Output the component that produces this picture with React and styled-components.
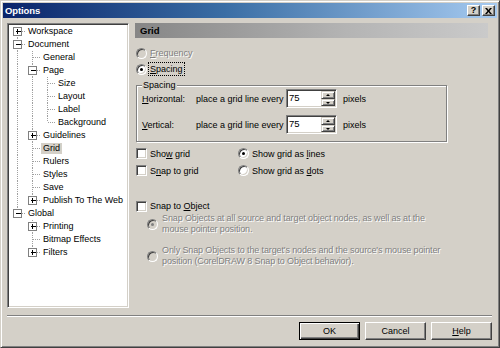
import React from 'react'
import styled, { createGlobalStyle } from 'styled-components'

const GlobalStyle = createGlobalStyle`
  html, body {
    margin: 0;
    padding: 0;
    background: #d4d0c8;
  }
  body {
    font-family: "Liberation Sans", Arial, sans-serif;
    font-size: 9px;
    color: #000;
  }
`

const Window = styled.div`
  box-sizing: border-box;
  width: 500px;
  height: 348px;
  padding: 2px;
  background: #d4d0c8;
  border: 1px solid;
  border-color: #d4d0c8 #404040 #404040 #d4d0c8;
  box-shadow: inset 1px 1px #fff, inset -1px -1px #808080;
  display: flex;
  flex-direction: column;
`

const TitleBar = styled.div`
  height: 15px;
  display: flex;
  align-items: center;
  padding: 0 0 0 2px;
  background: linear-gradient(to right, #0a246a, #3a6ea5 45%, #a6caf0);
`

const TitleText = styled.span`
  flex: 1;
  color: #fff;
  font-weight: bold;
  font-size: 9.5px;
  letter-spacing: -0.1px;
`

const TitleButton = styled.span`
  box-sizing: border-box;
  width: 13px;
  height: 11px;
  margin-left: ${p => p.$gap || 0}px;
  display: flex;
  align-items: center;
  justify-content: center;
  background: #d4d0c8;
  border: 1px solid;
  border-color: #fff #404040 #404040 #fff;
  box-shadow: inset -1px -1px #808080;
  font-weight: bold;
  font-size: 9px;
  line-height: 1;
`

const Main = styled.div`
  display: flex;
  gap: 6px;
  padding: 5px 0 0 4px;
`

const Tree = styled.div`
  box-sizing: border-box;
  width: 122px;
  height: 285px;
  background: #fff;
  border: 1px solid;
  border-color: #808080 #fff #fff #808080;
  box-shadow: inset 1px 1px #404040, inset -1px -1px #d4d0c8;
  padding: 1px 0 0 1px;
`

const TreeRow = styled.div`
  display: flex;
  align-items: center;
  height: 13px;
  white-space: nowrap;
`

const TreeLabel = styled.span`
  margin-left: 1px;
  padding: 0 2px;
  line-height: 11px;
  background: ${p => (p.$selected ? '#d4d0c8' : 'transparent')};
`

const Panel = styled.div`
  width: 353px;
  display: flex;
  flex-direction: column;
`

const Header = styled.div`
  height: 15px;
  display: flex;
  align-items: center;
  padding-left: 5px;
  font-weight: bold;
  font-size: 9.5px;
  background: linear-gradient(to right, #868686, #b4b4b4 60%, #cacaca);
`

const OptionRow = styled.div`
  display: flex;
  align-items: center;
  height: ${p => p.$h || 16}px;
  margin-top: ${p => p.$mt || 0}px;
  padding-left: ${p => p.$pl ?? 1}px;
`

const Radio = styled.span`
  box-sizing: border-box;
  flex: none;
  position: relative;
  width: 11px;
  height: 11px;
  border-radius: 50%;
  border: 1px solid;
  border-color: #808080 #fff #fff #808080;
  box-shadow: inset 1px 1px #404040, inset -1px -1px #d4d0c8;
  background: ${p => (p.$disabled ? '#d4d0c8' : '#fff')};

  &::after {
    content: '';
    display: ${p => (p.$checked ? 'block' : 'none')};
    position: absolute;
    left: 3px;
    top: 3px;
    width: 3px;
    height: 3px;
    border-radius: 50%;
    background: ${p => (p.$disabled ? '#808080' : '#000')};
  }
`

const Check = styled.span`
  box-sizing: border-box;
  flex: none;
  width: 11px;
  height: 11px;
  border: 1px solid;
  border-color: #808080 #fff #fff #808080;
  box-shadow: inset 1px 1px #404040, inset -1px -1px #d4d0c8;
  background: #fff;
`

const OptionText = styled.span`
  margin-left: 1px;
  padding: 0 1px;
  line-height: 12px;
  border: 1px dotted ${p => (p.$focus ? '#000' : 'transparent')};
  color: ${p => (p.$disabled ? '#808080' : '#000')};
  text-shadow: ${p => (p.$disabled ? '1px 1px 0 #fff' : 'none')};
`

const Group = styled.div`
  position: relative;
  box-sizing: border-box;
  width: 311px;
  height: 57px;
  margin: 8px 0 0 1px;
  padding: 3px 0 0 5px;
  border: 1px solid #808080;
  box-shadow: 1px 1px #fff, inset 1px 1px #fff;
  display: flex;
  flex-direction: column;
  gap: 7px;
`

const GroupTitle = styled.span`
  position: absolute;
  top: -7px;
  left: 5px;
  padding: 0 1px;
  line-height: 12px;
  background: #d4d0c8;
`

const GroupRow = styled.div`
  display: flex;
  align-items: center;
  height: 19px;
`

const FieldLabel = styled.span`
  width: ${p => p.$w}px;
  flex: none;
`

const SpinBox = styled.div`
  box-sizing: border-box;
  width: 51px;
  height: 19px;
  display: flex;
  background: #fff;
  border: 1px solid;
  border-color: #808080 #fff #fff #808080;
  box-shadow: inset 1px 1px #404040, inset -1px -1px #d4d0c8;
  padding: 1px;
`

const SpinValue = styled.span`
  flex: 1;
  padding: 1px 0 0 1px;
  font-size: 9.5px;
`

const SpinButtons = styled.div`
  width: 14px;
  display: flex;
  flex-direction: column;
`

const SpinButton = styled.span`
  box-sizing: border-box;
  flex: 1;
  position: relative;
  background: #d4d0c8;
  border: 1px solid;
  border-color: #d4d0c8 #404040 #404040 #d4d0c8;
  box-shadow: inset 1px 1px #fff, inset -1px -1px #808080;

  &::after {
    content: '';
    position: absolute;
    left: 4px;
    top: 2px;
    border-left: 2px solid transparent;
    border-right: 2px solid transparent;
    ${p => (p.$up ? 'border-bottom: 2px solid #000;' : 'border-top: 2px solid #000;')}
  }
`

const Unit = styled.span`
  margin-left: 6px;
`

const ChoiceGrid = styled.div`
  display: grid;
  grid-template-columns: 102px auto;
  grid-auto-rows: 17px;
  margin: 3px 0 0 1px;
`

const Choice = styled.div`
  display: flex;
  align-items: center;
`

const SubOption = styled.div`
  display: flex;
  align-items: center;
  margin-top: ${p => p.$mt}px;
  padding-left: 12px;
`

const SubText = styled.span`
  margin-left: 4px;
  max-width: 284px;
  line-height: 11px;
  letter-spacing: -0.12px;
  color: #808080;
  text-shadow: 1px 1px 0 #fff;
`

const Separator = styled.div`
  margin: 7px 5px 0 4px;
  border-top: 1px solid #808080;
  border-bottom: 1px solid #fff;
`

const Footer = styled.div`
  display: flex;
  justify-content: flex-end;
  gap: 5px;
  margin-top: 5px;
  padding-right: 5px;
`

const Button = styled.span`
  box-sizing: border-box;
  width: 61px;
  height: 18px;
  display: flex;
  align-items: center;
  justify-content: center;
  background: #d4d0c8;
  border: 1px solid;
  border-color: ${p => (p.$default ? '#000' : '#fff #404040 #404040 #fff')};
  box-shadow: ${p =>
    p.$default
      ? 'inset 1px 1px #fff, inset -1px -1px #404040, inset -2px -2px #808080'
      : 'inset -1px -1px #808080'};
`

const U = styled.span`
  text-decoration: underline;
`

const treeItems = [
  { label: 'Workspace', level: 0, box: '+', first: true, guides: [] },
  { label: 'Document', level: 0, box: '-', guides: [] },
  { label: 'General', level: 1, guides: [0] },
  { label: 'Page', level: 1, box: '-', guides: [0] },
  { label: 'Size', level: 2, guides: [0, 1] },
  { label: 'Layout', level: 2, guides: [0, 1] },
  { label: 'Label', level: 2, guides: [0, 1] },
  { label: 'Background', level: 2, last: true, guides: [0, 1] },
  { label: 'Guidelines', level: 1, box: '+', guides: [0] },
  { label: 'Grid', level: 1, selected: true, guides: [0] },
  { label: 'Rulers', level: 1, guides: [0] },
  { label: 'Styles', level: 1, guides: [0] },
  { label: 'Save', level: 1, guides: [0] },
  { label: 'Publish To The Web', level: 1, box: '+', last: true, guides: [0] },
  { label: 'Global', level: 0, box: '-', last: true, guides: [] },
  { label: 'Printing', level: 1, box: '+', guides: [] },
  { label: 'Bitmap Effects', level: 1, guides: [] },
  { label: 'Filters', level: 1, box: '+', last: true, guides: [] },
]

// dotted guide lines and +/- box for one tree row
const TreeLines = ({ item }) => {
  const w = 16 + item.level * 15
  const cx = 8 + item.level * 15 + 0.5
  const dot = { stroke: '#a0a0a0', strokeWidth: 1, strokeDasharray: '1 1', shapeRendering: 'crispEdges' }
  return (
    <svg width={w} height={13} style={{ flex: 'none' }}>
      {item.guides.map(g => (
        <line key={g} x1={8 + g * 15 + 0.5} y1={0} x2={8 + g * 15 + 0.5} y2={13} {...dot} />
      ))}
      <line x1={cx} y1={item.first ? 6 : 0} x2={cx} y2={item.last ? 6 : 13} {...dot} />
      <line x1={cx} y1={6.5} x2={w} y2={6.5} {...dot} />
      {item.box && (
        <g shapeRendering="crispEdges">
          <rect x={cx - 4} y={2.5} width={8} height={8} fill="#fff" stroke="#808080" />
          <line x1={cx - 2} y1={6.5} x2={cx + 3} y2={6.5} stroke="#000" />
          {item.box === '+' && <line x1={cx} y1={4} x2={cx} y2={9} stroke="#000" />}
        </g>
      )}
    </svg>
  )
}

const App = () => {
  return (
    <Window>
      <GlobalStyle />
      <TitleBar>
        <TitleText>Options</TitleText>
        <TitleButton>?</TitleButton>
        <TitleButton $gap={2}>
          <svg width="7" height="6" viewBox="0 0 7 6">
            <path d="M0 0h2l1.5 2 1.5-2h2L4.5 3 7 6H5L3.5 4 2 6H0l2.5-3z" fill="#000" />
          </svg>
        </TitleButton>
        <span style={{ width: 2 }} />
      </TitleBar>

      <Main>
        <Tree>
          {treeItems.map(item => (
            <TreeRow key={item.label}>
              <TreeLines item={item} />
              <TreeLabel $selected={item.selected}>{item.label}</TreeLabel>
            </TreeRow>
          ))}
        </Tree>

        <Panel>
          <Header>Grid</Header>

          <OptionRow $mt={7}>
            <Radio $disabled />
            <OptionText $disabled><U>F</U>requency</OptionText>
          </OptionRow>
          <OptionRow>
            <Radio $checked />
            <OptionText $focus><U>S</U>pacing</OptionText>
          </OptionRow>

          <Group>
            <GroupTitle>Spacing</GroupTitle>
            <GroupRow>
              <FieldLabel $w={54}><U>H</U>orizontal:</FieldLabel>
              <FieldLabel $w={90}>place a grid line every</FieldLabel>
              <SpinBox>
                <SpinValue>75</SpinValue>
                <SpinButtons>
                  <SpinButton $up />
                  <SpinButton />
                </SpinButtons>
              </SpinBox>
              <Unit>pixels</Unit>
            </GroupRow>
            <GroupRow>
              <FieldLabel $w={54}><U>V</U>ertical:</FieldLabel>
              <FieldLabel $w={90}>place a grid line every</FieldLabel>
              <SpinBox>
                <SpinValue>75</SpinValue>
                <SpinButtons>
                  <SpinButton $up />
                  <SpinButton />
                </SpinButtons>
              </SpinBox>
              <Unit>pixels</Unit>
            </GroupRow>
          </Group>

          <ChoiceGrid>
            <Choice>
              <Check />
              <OptionText>Sho<U>w</U> grid</OptionText>
            </Choice>
            <Choice>
              <Radio $checked />
              <OptionText>Show grid as <U>l</U>ines</OptionText>
            </Choice>
            <Choice>
              <Check />
              <OptionText>S<U>n</U>ap to grid</OptionText>
            </Choice>
            <Choice>
              <Radio />
              <OptionText>Show grid as <U>d</U>ots</OptionText>
            </Choice>
          </ChoiceGrid>

          <OptionRow $mt={19}>
            <Check />
            <OptionText>Snap to <U>O</U>bject</OptionText>
          </OptionRow>

          <SubOption $mt={-1}>
            <Radio $disabled $checked />
            <SubText>
              Snap Objects at all source and target object nodes, as well as at the mouse pointer position.
            </SubText>
          </SubOption>
          <SubOption $mt={10}>
            <Radio $disabled />
            <SubText>
              Only Snap Objects to the target's nodes and the source's mouse pointer position (CorelDRAW 8 Snap to Object behavior).
            </SubText>
          </SubOption>
        </Panel>
      </Main>

      <Separator />
      <Footer>
        <Button $default>OK</Button>
        <Button>Cancel</Button>
        <Button><U>H</U>elp</Button>
      </Footer>
    </Window>
  )
}

export default App
